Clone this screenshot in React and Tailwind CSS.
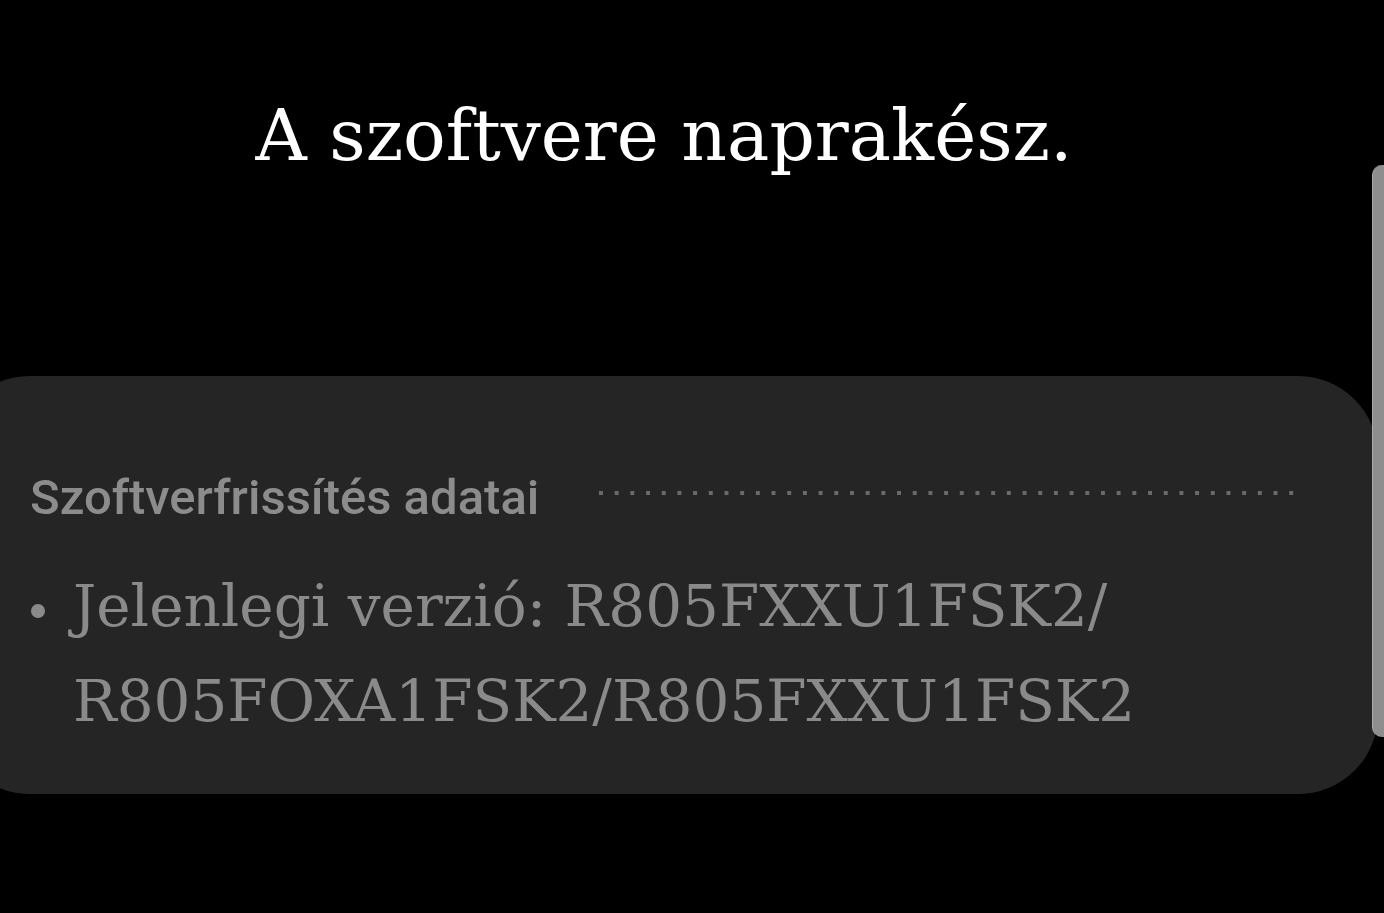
export default function App() {
  return (
    <div className="relative min-h-[913px] w-[1384px] overflow-hidden bg-black">
      <div className="ml-[-50px] w-[1428px]">
        <h1
          className="pt-[100px] text-center text-[71px] leading-none text-white"
          style={{ fontFamily: '"DejaVu Serif", serif' }}
        >
          A szoftvere naprakész.
        </h1>
        <div className="mt-[205px] rounded-[80px] bg-[#252525] pl-[80px] pr-[82px] pt-[97px] pb-[45px]">
          <div className="flex items-start">
            <div
              className="text-[49px] font-medium leading-none text-[#8c8c8c]"
              style={{ fontFamily: 'Roboto, "Noto Sans", sans-serif' }}
            >
              Szoftverfrissítés adatai
            </div>
            <div className="ml-[60px] mt-[18px] h-[4px] flex-1 bg-[linear-gradient(to_right,#6a6a6a_4px,transparent_4px)] bg-[length:15.7px_4px]" />
          </div>
          <div className="mt-[37px] flex items-start">
            <span className="mt-[45px] ml-[1px] h-[14px] w-[14px] shrink-0 rounded-full bg-[#8a8a8a]" />
            <div
              className="ml-[28px] text-[58px] leading-[95px] text-[#8a8a8a]"
              style={{ fontFamily: '"DejaVu Serif", serif' }}
            >
              <div>Jelenlegi verzió: R805FXXU1FSK2/</div>
              <div>R805FOXA1FSK2/R805FXXU1FSK2</div>
            </div>
          </div>
        </div>
      </div>
      <div className="absolute right-0 top-[165px] h-[572px] w-[12px] rounded-l-[10px] border-l border-[#a8a8a8] bg-[#8e8e8e]" />
    </div>
  );
}
